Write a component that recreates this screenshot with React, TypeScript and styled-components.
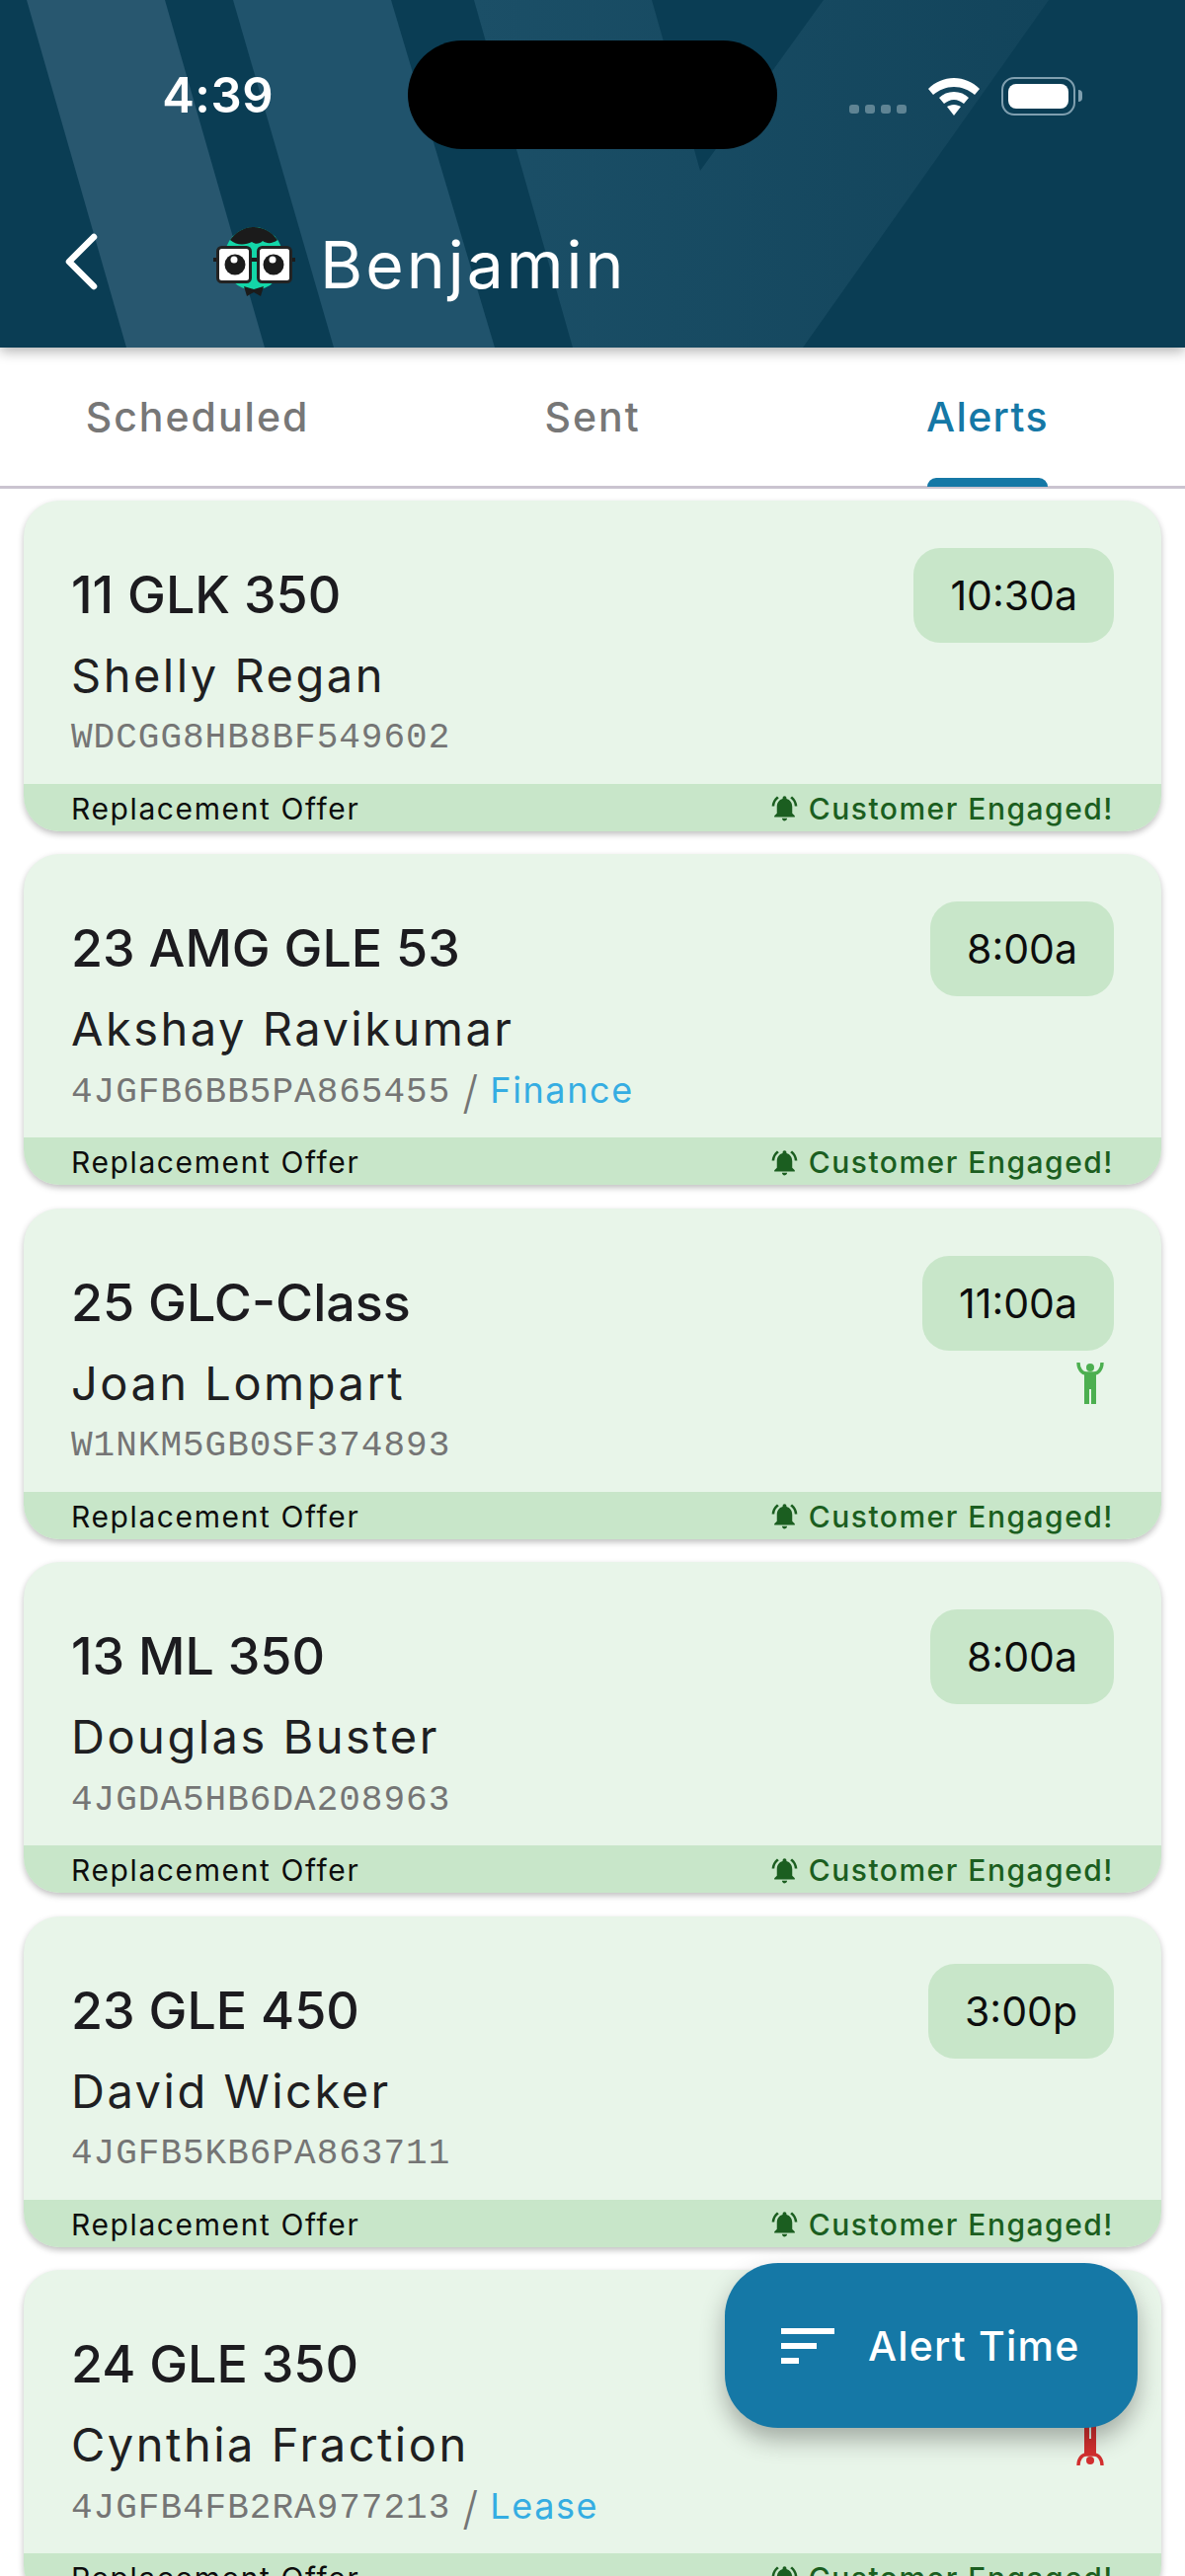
import styled, { createGlobalStyle } from 'styled-components';
import { MdNotificationsActive } from 'react-icons/md';

const GlobalStyle = createGlobalStyle`
  html,
  body {
    margin: 0;
    background: #ffffff;
  }
  * {
    box-sizing: border-box;
  }
`;

type Mood = 'up' | 'down';

type AlertType = {
  model: string;
  name: string;
  vin: string;
  time: string;
  product?: string;
  mood?: Mood;
};

const alerts: AlertType[] = [
  { model: '11 GLK 350', name: 'Shelly Regan', vin: 'WDCGG8HB8BF549602', time: '10:30a' },
  { model: '23 AMG GLE 53', name: 'Akshay Ravikumar', vin: '4JGFB6BB5PA865455', time: '8:00a', product: 'Finance' },
  { model: '25 GLC-Class', name: 'Joan Lompart', vin: 'W1NKM5GB0SF374893', time: '11:00a', mood: 'up' },
  { model: '13 ML 350', name: 'Douglas Buster', vin: '4JGDA5HB6DA208963', time: '8:00a' },
  { model: '23 GLE 450', name: 'David Wicker', vin: '4JGFB5KB6PA863711', time: '3:00p' },
  { model: '24 GLE 350', name: 'Cynthia Fraction', vin: '4JGFB4FB2RA977213', time: '9:00a', product: 'Lease', mood: 'down' },
];

const HeaderArt = () => (
  <HeaderBackdrop viewBox="0 0 1200 352" preserveAspectRatio="none">
    <defs>
      <linearGradient id="fold" x1="0" y1="0" x2="1" y2="0">
        <stop offset="0" stopColor="#1b4f67" />
        <stop offset="1" stopColor="#12445b" />
      </linearGradient>
    </defs>
    <polygon points="27,0 167,0 268,352 128,352" fill="#28576f" />
    <polygon points="236,0 396,0 501,352 338,352" fill="#20536c" />
    <polygon points="480,0 660,0 709,173 834,0 1062,0 813,352 580,352" fill="url(#fold)" />
  </HeaderBackdrop>
);

const WifiIcon = () => (
  <svg width="52" height="38" viewBox="0 0 52 38">
    <path d="M26 0C16 0 7 4 0 11l5 6c6-5 13-8 21-8s15 3 21 8l5-6C45 4 36 0 26 0z" fill="#fff" />
    <path d="M26 14c-6 0-11 2-15 6l5 6c3-2 6-4 10-4s7 2 10 4l5-6c-4-4-9-6-15-6z" fill="#fff" />
    <path d="M26 27c-3 0-5 1-7 2l7 9 7-9c-2-1-4-2-7-2z" fill="#fff" />
  </svg>
);

const Avatar = () => (
  <svg width="83" height="70" viewBox="0 0 83 70">
    <ellipse cx="41" cy="32" rx="30" ry="32" fill="#13d6a8" />
    <path d="M17 13C23 5 31 0 41 0s18 5 24 13c-5 4-11 4-15 1-3 3-7 4-11 1-6 3-15 4-22-2z" fill="#1b1b1b" />
    <path d="M31 60l10 3 10-3-3 10-7-4-7 4z" fill="#1b1b1b" />
    <rect x="0" y="31" width="83" height="4" fill="#1b1b1b" />
    <rect x="4.5" y="20.5" width="33" height="35" rx="4" fill="#fff" stroke="#232323" strokeWidth="3" />
    <rect x="45.5" y="20.5" width="33" height="35" rx="4" fill="#fff" stroke="#232323" strokeWidth="3" />
    <circle cx="22" cy="38" r="10.5" fill="#1b1b1b" />
    <circle cx="61" cy="38" r="10.5" fill="#1b1b1b" />
    <circle cx="21" cy="33" r="3.5" fill="#fff" />
    <circle cx="60" cy="33" r="3.5" fill="#fff" />
  </svg>
);

const MoodIcon = ({ mood }: { mood: Mood }) => (
  <MoodSvg $mood={mood} viewBox="0 0 28 42">
    <circle cx="14" cy="5" r="4" fill="currentColor" />
    <path d="M2 0c0 7 4 11 8 11h8c4 0 8-4 8-11" fill="none" stroke="currentColor" strokeWidth="3.4" />
    <path d="M8 11h12v31h-5V27h-2v15H8z" fill="currentColor" />
  </MoodSvg>
);

const AlertCard = ({ alert }: { alert: AlertType }) => (
  <Card>
    <CardBody>
      <CardInfo>
        <Model>{alert.model}</Model>
        <Customer>{alert.name}</Customer>
        <VinRow>
          <Vin>{alert.vin}</Vin>
          {alert.product && (
            <>
              <Slash>/</Slash>
              <Product>{alert.product}</Product>
            </>
          )}
        </VinRow>
      </CardInfo>
      <CardSide>
        <TimeChip>{alert.time}</TimeChip>
        {alert.mood && <MoodIcon mood={alert.mood} />}
      </CardSide>
    </CardBody>
    <CardFooter>
      <OfferLabel>Replacement Offer</OfferLabel>
      <Engaged>
        <MdNotificationsActive size={31} />
        <span>Customer Engaged!</span>
      </Engaged>
    </CardFooter>
  </Card>
);

const App = () => (
  <Screen>
    <GlobalStyle />
    <Header>
      <HeaderArt />
      <StatusBar>
        <Clock>4:39</Clock>
        <Island />
        <StatusIcons>
          <SignalDots>
            <i />
            <i />
            <i />
            <i />
          </SignalDots>
          <WifiIcon />
          <Battery>
            <BatteryLevel />
          </Battery>
        </StatusIcons>
      </StatusBar>
      <TitleBar>
        <BackButton width="36" height="60" viewBox="0 0 36 60">
          <path d="M31 5L6 30l25 25" fill="none" stroke="#fff" strokeWidth="6.5" strokeLinecap="round" strokeLinejoin="round" />
        </BackButton>
        <Avatar />
        <Title>Benjamin</Title>
      </TitleBar>
    </Header>
    <Tabs>
      <Tab>Scheduled</Tab>
      <Tab>Sent</Tab>
      <Tab $active>Alerts</Tab>
    </Tabs>
    <CardList>
      {alerts.map((alert) => (
        <AlertCard key={alert.vin} alert={alert} />
      ))}
    </CardList>
    <SortButton>
      <svg width="54" height="36" viewBox="0 0 54 36">
        <rect x="0" y="0" width="54" height="6" fill="#fff" />
        <rect x="0" y="15" width="36" height="6" fill="#fff" />
        <rect x="0" y="30" width="18" height="6" fill="#fff" />
      </svg>
      <span>Alert Time</span>
    </SortButton>
  </Screen>
);

export default App;

const fontStack = `Inter, "Liberation Sans", sans-serif`;

const Screen = styled.div`
  position: relative;
  width: 1200px;
  height: 2609px;
  overflow: hidden;
  background: #ffffff;
  font-family: ${fontStack};
`;

const Header = styled.header`
  position: relative;
  z-index: 2;
  height: 352px;
  background: #0a3d54;
  box-shadow: 0 4px 12px rgba(0, 0, 0, 0.3);
`;

const HeaderBackdrop = styled.svg`
  position: absolute;
  inset: 0;
  width: 100%;
  height: 100%;
`;

const StatusBar = styled.div`
  position: relative;
  display: flex;
  align-items: flex-start;
  height: 190px;
  padding-top: 41px;
`;

const Clock = styled.div`
  width: 413px;
  padding: 26px 136px 0 0;
  text-align: right;
  font-size: 49px;
  line-height: 60px;
  font-weight: 600;
  letter-spacing: 0.5px;
  color: #ffffff;
`;

const Island = styled.div`
  width: 374px;
  height: 110px;
  border-radius: 55px;
  background: #000000;
`;

const StatusIcons = styled.div`
  display: flex;
  align-items: flex-end;
  margin: 37px 0 0 73px;
`;

const SignalDots = styled.div`
  display: flex;
  gap: 6px;
  margin: 0 22px 2px 0;
  i {
    width: 10px;
    height: 9px;
    border-radius: 3px;
    background: #5f8494;
  }
`;

const Battery = styled.div`
  position: relative;
  width: 75px;
  height: 39px;
  margin-left: 22px;
  padding: 5px;
  border: 2.5px solid #7f9faf;
  border-radius: 13px;
  &::after {
    content: '';
    position: absolute;
    right: -9px;
    top: 11px;
    width: 4px;
    height: 12px;
    border-radius: 0 4px 4px 0;
    background: #7f9faf;
  }
`;

const BatteryLevel = styled.div`
  height: 100%;
  border-radius: 8px;
  background: #ffffff;
`;

const TitleBar = styled.div`
  position: relative;
  display: flex;
  align-items: center;
  padding-left: 64px;
  margin-top: 35px;
  height: 80px;
`;

const BackButton = styled.svg`
  flex: none;
  margin-right: 116px;
`;

const Title = styled.h1`
  margin: 6px 0 0 25px;
  font-size: 66px;
  line-height: 80px;
  font-weight: 400;
  letter-spacing: 3px;
  color: #ffffff;
`;

const Tabs = styled.nav`
  display: grid;
  grid-template-columns: repeat(3, 400px);
  height: 142.5px;
  border-bottom: 3px solid #cac4d0;
`;

const Tab = styled.div<{ $active?: boolean }>`
  position: relative;
  display: flex;
  align-items: center;
  justify-content: center;
  font-size: 41px;
  font-weight: 500;
  letter-spacing: ${(p) => (p.$active ? '1.4px' : '2px')};
  color: ${(p) => (p.$active ? '#1578a6' : '#777777')};
  ${(p) =>
    p.$active &&
    `
    &::after {
      content: '';
      position: absolute;
      left: 139px;
      bottom: -1px;
      width: 122px;
      height: 9px;
      border-radius: 9px 9px 0 0;
      background: #1578a6;
    }
  `}
`;

const CardList = styled.div`
  display: flex;
  flex-direction: column;
  gap: 23.5px;
  padding: 12px 24px 0;
`;

const Card = styled.article`
  flex: none;
  height: 335px;
  display: flex;
  flex-direction: column;
  border-radius: 36px;
  background: #e8f5e9;
  box-shadow: 0 3px 6px rgba(0, 0, 0, 0.25);
  overflow: hidden;
`;

const CardBody = styled.div`
  flex: 1;
  min-height: 0;
  display: flex;
  justify-content: space-between;
  padding: 48px 48px 0;
`;

const CardInfo = styled.div`
  display: flex;
  flex-direction: column;
`;

const Model = styled.div`
  font-size: 52px;
  line-height: 96px;
  font-weight: 500;
  color: #1c1b1f;
`;

const Customer = styled.div`
  font-size: 47px;
  line-height: 66px;
  font-weight: 400;
  letter-spacing: 2.5px;
  color: #1f1f22;
`;

const VinRow = styled.div`
  display: flex;
  align-items: center;
  height: 62px;
`;

const Vin = styled.span`
  font-family: 'Liberation Mono', monospace;
  font-size: 36px;
  letter-spacing: 1px;
  color: #757575;
`;

const Slash = styled.span`
  margin: 0 12px;
  font-size: 46px;
  font-weight: 300;
  color: #757575;
`;

const Product = styled.span`
  margin-bottom: 4px;
  font-size: 36px;
  letter-spacing: 1.6px;
  color: #35ade2;
`;

const CardSide = styled.div`
  display: flex;
  flex-direction: column;
  align-items: flex-end;
`;

const TimeChip = styled.div`
  height: 96px;
  padding: 0 37px;
  display: flex;
  align-items: center;
  border-radius: 27px;
  background: #c8e6c9;
  font-size: 41px;
  font-weight: 400;
  color: #0d0d0d;
`;

const MoodSvg = styled.svg<{ $mood: Mood }>`
  width: 28px;
  height: 42px;
  margin: 12px 10px 0 0;
  color: ${(p) => (p.$mood === 'up' ? '#4caf50' : '#d32f2f')};
  transform: ${(p) => (p.$mood === 'up' ? 'none' : 'rotate(180deg)')};
`;

const CardFooter = styled.div`
  flex: none;
  height: 48px;
  display: flex;
  align-items: center;
  justify-content: space-between;
  padding: 2px 48px 0;
  background: #c8e6c9;
`;

const OfferLabel = styled.span`
  font-size: 30px;
  letter-spacing: 1.6px;
  color: #0d0d0d;
`;

const Engaged = styled.div`
  display: flex;
  align-items: center;
  gap: 9px;
  font-size: 30px;
  font-weight: 500;
  letter-spacing: 1.5px;
  color: #1b5e20;
`;

const SortButton = styled.button`
  position: absolute;
  left: 734px;
  top: 2292px;
  width: 418px;
  height: 167px;
  display: flex;
  align-items: center;
  gap: 34px;
  padding: 0 0 0 57px;
  border: none;
  border-radius: 54px;
  background: #1578a6;
  box-shadow: 0 12px 24px rgba(0, 0, 0, 0.3);
  font-family: ${fontStack};
  font-size: 41px;
  font-weight: 500;
  letter-spacing: 1.2px;
  color: #ffffff;
  z-index: 3;
`;
